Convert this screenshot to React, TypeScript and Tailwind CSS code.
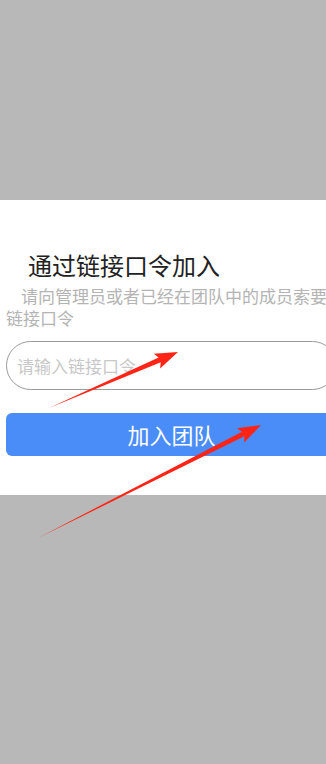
import React from 'react'

const cjk = { fontFamily: '"Noto Sans CJK SC", "Noto Sans", sans-serif' }

// tapered annotation arrow: thin tail, thick shaft, triangular head
function arrowPoints(x1: number, y1: number, x2: number, y2: number) {
  const dx = x2 - x1
  const dy = y2 - y1
  const len = Math.hypot(dx, dy)
  const ux = dx / len
  const uy = dy / len
  const nx = -uy
  const ny = ux
  const headLen = 20
  const headW = 8
  const shaftW = 2.6
  const bx = x2 - ux * headLen
  const by = y2 - uy * headLen
  const pts = [
    [x1, y1],
    [bx + nx * shaftW, by + ny * shaftW],
    [bx + nx * headW - ux * 3, by + ny * headW - uy * 3],
    [x2, y2],
    [bx - nx * headW - ux * 3, by - ny * headW - uy * 3],
    [bx - nx * shaftW, by - ny * shaftW],
  ]
  return pts.map((p) => p.join(',')).join(' ')
}

export default function App() {
  return (
    <div className="relative w-[326px] h-[764px] overflow-hidden bg-[#b8b8b8]" style={cjk}>
      <div className="h-[200px]" />
      <div className="h-[295px] bg-white pt-[49px] pl-[6px] w-[343px]">
        <h1 className="ml-[22px] text-[24px] leading-[32px] text-[#222]">通过链接口令加入</h1>
        <p className="mt-[4px] w-[331px] indent-[15px] text-[17px] leading-[22px] text-[#b4b4b4]">
          请向管理员或者已经在团队中的成员索要链接口令
        </p>
        <input
          className="mt-[12px] block w-[331px] h-[49px] rounded-full border border-[#9a9a9a] pl-[10px] text-[17px] outline-none placeholder:text-[#c8c8c8]"
          placeholder="请输入链接口令"
          style={cjk}
        />
        <button
          className="mt-[23px] block w-[331px] h-[43px] rounded-[6px] bg-[#4a8cf8] text-white text-[22px] leading-[43px]"
          style={cjk}
        >
          加入团队
        </button>
      </div>
      <svg className="absolute inset-0 pointer-events-none" width="326" height="764">
        <polygon points={arrowPoints(49, 408, 178, 352)} fill="#ff2415" />
        <polygon points={arrowPoints(38, 538, 261, 425)} fill="#ff2415" />
      </svg>
    </div>
  )
}
